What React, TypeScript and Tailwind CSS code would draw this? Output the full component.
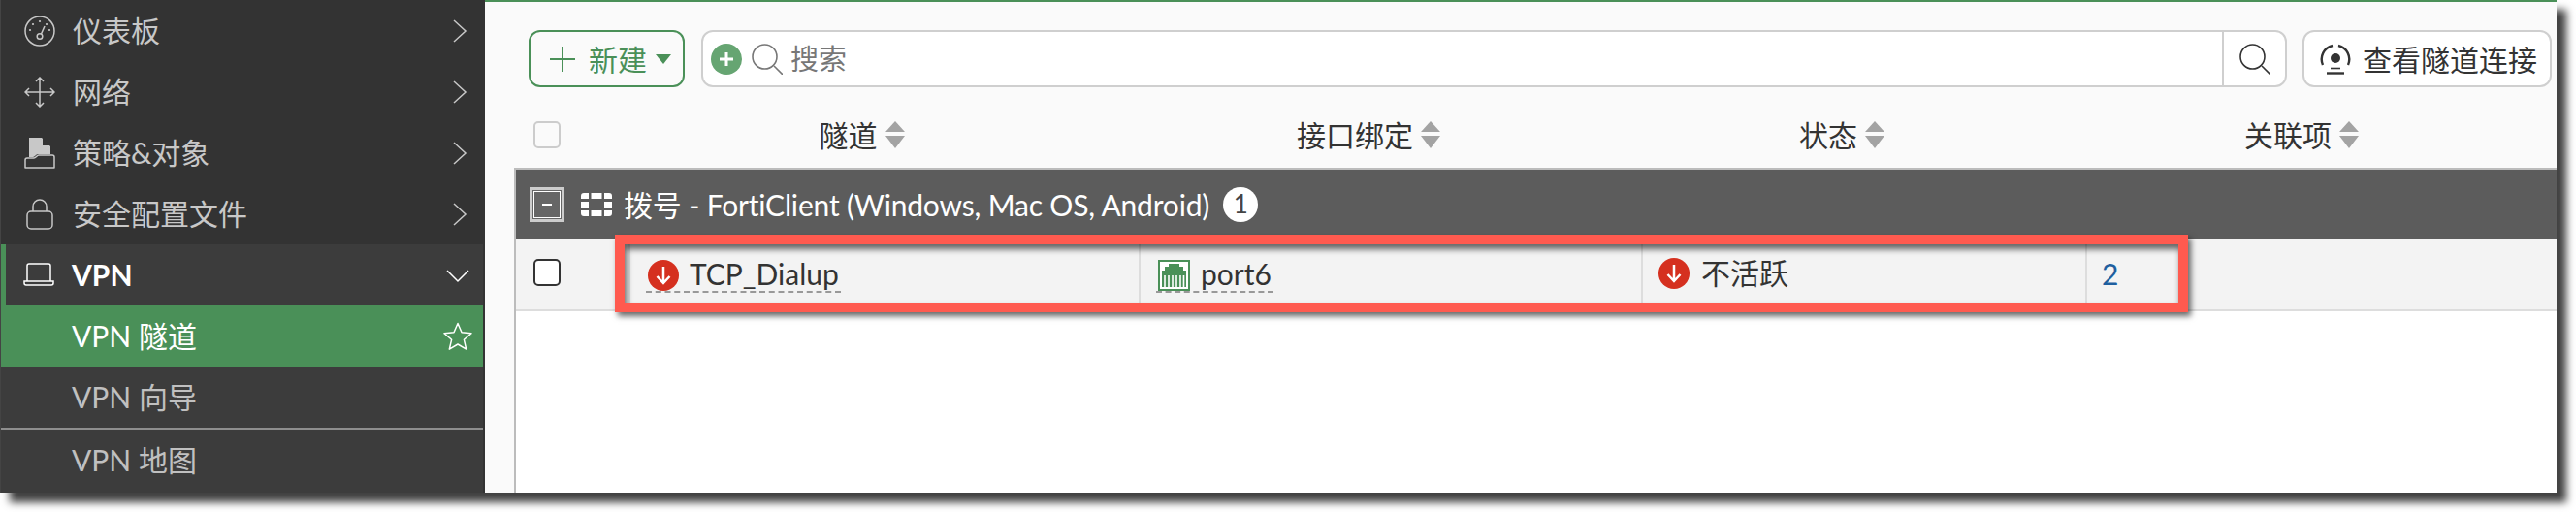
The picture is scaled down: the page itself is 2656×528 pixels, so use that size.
import React from 'react';

const font = "font-['Lato','Noto_Sans_CJK_SC',sans-serif]";

const Chevron = ({ down }: { down?: boolean }) => (
  <svg width="26" height="26" viewBox="0 0 26 26" fill="none" stroke="currentColor" strokeWidth="1.5">
    {down ? <path d="M2 8l11 11L24 8" /> : <path d="M8 2l12 11L8 24" />}
  </svg>
);

const Gauge = () => (
  <svg width="32" height="32" viewBox="0 0 32 32" fill="none" stroke="currentColor" strokeWidth="1.5">
    <circle cx="16" cy="16" r="15" />
    <circle cx="16" cy="21.5" r="2.8" />
    <path d="M17.5 19l3.5-8" />
    <g fill="currentColor" stroke="none">
      <circle cx="16" cy="6" r="1.1" />
      <circle cx="9" cy="9" r="1.1" />
      <circle cx="23" cy="9" r="1.1" />
      <circle cx="6" cy="15" r="1.1" />
      <circle cx="26" cy="15" r="1.1" />
    </g>
  </svg>
);

const MoveArrows = () => (
  <svg width="32" height="32" viewBox="0 0 32 32" fill="none" stroke="currentColor" strokeWidth="1.5">
    <path d="M16 1v30M1 16h30M12 5l4-4 4 4M12 27l4 4 4-4M5 12l-4 4 4 4M27 12l4 4-4 4" />
  </svg>
);

const PolicyIcon = () => (
  <svg width="32" height="32" viewBox="0 0 32 32" fill="none">
    <path d="M5 0h13l9 9v8H14c-2 0-3 3-5 3H5z" fill="currentColor" />
    <path d="M19 0v8h8z" fill="#333" />
    <path d="M1 31v-8c0-1 1-2 2-2h7c2 0 3-3 5-3h14c1 0 2 1 2 2v11z" fill="#333" stroke="currentColor" strokeWidth="1.5" strokeLinejoin="round" />
  </svg>
);

const LockIcon = () => (
  <svg width="28" height="32" viewBox="0 0 28 32" fill="none" stroke="currentColor" strokeWidth="1.5">
    <rect x="1" y="13" width="26" height="18" rx="4" />
    <path d="M7 13V8a7 7 0 0 1 14 0v5" />
  </svg>
);

const LaptopIcon = () => (
  <svg width="32" height="26" viewBox="0 0 32 26" fill="none" stroke="currentColor" strokeWidth="1.5">
    <path d="M4 19V3a2 2 0 0 1 2-2h20a2 2 0 0 1 2 2v16" />
    <path d="M1 19h30v2a2 2 0 0 1-2 2H3a2 2 0 0 1-2-2z" />
  </svg>
);

const StarIcon = () => (
  <svg width="30" height="30" viewBox="0 0 30 30" fill="none" stroke="currentColor" strokeWidth="1.5" strokeLinejoin="round">
    <path d="M15 1.5l4 9.3 10 .9-7.600 6.600 2.300 9.800L15 23l-8.700 5.100 2.300-9.800L1 11.700l10-.9z" />
  </svg>
);

const Search = ({ color }: { color: string }) => (
  <svg width="32" height="32" viewBox="0 0 32 32" fill="none" stroke={color} strokeWidth="1.6">
    <circle cx="13.500" cy="13.500" r="12.500" />
    <path d="M23 23l9 9" />
  </svg>
);

const SortIcon = () => (
  <svg width="20" height="28" viewBox="0 0 20 28" fill="#a3a3a3" className="shrink-0">
    <path d="M10 0l10 11H0z" />
    <path d="M0 15h20L10 28z" />
  </svg>
);

const DownBadge = () => (
  <svg width="32" height="32" viewBox="0 0 32 32" className="shrink-0">
    <circle cx="16" cy="16" r="16" fill="#d5301f" />
    <path d="M16 7v17M9.500 17l6.500 7 6.500-7" fill="none" stroke="#fff" strokeWidth="2.500" />
  </svg>
);

const PortIcon = () => (
  <svg width="33" height="32" viewBox="0 0 33 32" className="shrink-0">
    <rect x="1" y="1" width="31" height="30" fill="#fff" stroke="#4a9058" strokeWidth="2" />
    <path d="M4 28V11h3V7h4V4h11v3h4v4h3v17z" fill="#4a9058" />
    <path d="M7 16v12M11 16v12M15 16v12M19 16v12M23 16v12M26.500 16v12" stroke="#fff" strokeWidth="1.600" />
  </svg>
);

const FortiLogo = () => (
  <svg width="32" height="24" viewBox="0 0 32 24" fill="#fff">
    <path d="M0 3a3 3 0 0 1 3-3h5v6H0zM10.500 0h11v6h-11zM24 0h5a3 3 0 0 1 3 3v3h-8zM0 9h8v6H0zM24 9h8v6h-8zM0 18h8v6H3a3 3 0 0 1-3-3zM10.500 18h11v6h-11zM24 18h8v3a3 3 0 0 1-3 3h-5z" />
  </svg>
);

const TunnelConn = () => (
  <svg width="32" height="32" viewBox="0 0 32 32" fill="none" stroke="#333" strokeWidth="2.4">
    <path d="M3 22A14.500 14.500 0 0 1 13 2M19 2a14.500 14.500 0 0 1 10 20" />
    <circle cx="16" cy="15" r="5" fill="#333" stroke="none" />
    <path d="M11 25.500h10" strokeWidth="1.600" />
    <path d="M7 30.500h18" />
  </svg>
);

const NavItem = ({ icon, label }: { icon: React.ReactNode; label: string }) => (
  <div className="flex h-[63px] items-center pl-6 pr-[12px] text-[#c8c8c8]">
    <span className="flex w-8 justify-center">{icon}</span>
    <span className="ml-[18px] flex-1 text-[30px]">{label}</span>
    <Chevron />
  </div>
);

const Sidebar = () => (
  <aside className="flex w-[500px] shrink-0 flex-col border-l border-r-2 border-[#444] border-r-[#333] bg-[#333]">
    <NavItem icon={<Gauge />} label="仪表板" />
    <NavItem icon={<MoveArrows />} label="网络" />
    <NavItem icon={<PolicyIcon />} label="策略&对象" />
    <NavItem icon={<LockIcon />} label="安全配置文件" />
    <div className="flex-1 bg-[#3c3c3c]">
      <div className="flex h-[63px] items-center border-l-[5px] border-[#4a9058] pl-[18px] pr-[13px] text-white">
        <span className="flex w-8 justify-center"><LaptopIcon /></span>
        <span className="ml-[18px] flex-1 text-[30px] font-bold">VPN</span>
        <Chevron down />
      </div>
      <div className="flex h-[63px] items-center bg-[#4a9058] pl-[73px] pr-[11px] text-white">
        <span className="flex-1 text-[30px]">VPN 隧道</span>
        <StarIcon />
      </div>
      <div className="flex h-[63px] items-center pl-[73px] text-[30px] text-[#c0c0c0]">VPN 向导</div>
      <div className="flex h-[65px] items-center border-t-2 border-[#8e8e8e] pl-[73px] text-[30px] text-[#c0c0c0]">VPN 地图</div>
    </div>
  </aside>
);

const Toolbar = () => (
  <div className="flex h-[59px] items-stretch pl-[45px] pr-[5px]">
    <button className="flex w-[161px] items-center rounded-[12px] border-2 border-[#4a9058] pl-5 text-[30px] text-[#4a9058]">
      <svg width="26" height="26" viewBox="0 0 26 26" stroke="currentColor" strokeWidth="2"><path d="M13 0v26M0 13h26" /></svg>
      <span className="ml-[14px] leading-none">新建</span>
      <svg width="16" height="10" viewBox="0 0 16 10" fill="currentColor" className="ml-[9px]"><path d="M0 0h16l-8 10z" /></svg>
    </button>
    <div className="ml-[17px] flex w-[1635px] items-center rounded-[12px] border-2 border-[#cfcfcf] bg-white pl-2">
      <span className="flex h-8 w-8 items-center justify-center rounded-full bg-[#66a572]">
        <svg width="16" height="16" viewBox="0 0 16 16" stroke="#fff" strokeWidth="3"><path d="M8 1v14M1 8h14" /></svg>
      </span>
      <span className="ml-[10px]"><Search color="#777" /></span>
      <span className="ml-2 flex-1 text-[29px] text-[#777]">搜索</span>
      <span className="flex h-full w-[65px] items-center justify-center border-l-2 border-[#cfcfcf]"><Search color="#333" /></span>
    </div>
    <button className="ml-4 flex w-[257px] items-center rounded-[12px] border-2 border-[#cfcfcf] bg-white pl-4 text-[30px] text-[#333]">
      <TunnelConn />
      <span className="ml-3 leading-none">查看隧道连接</span>
    </button>
  </div>
);

const HeaderCell = ({ label }: { label: string }) => (
  <div className="flex h-7 items-center justify-center gap-2 text-[30px] leading-none text-[#333]">
    <span>{label}</span>
    <SortIcon />
  </div>
);

const Table = () => (
  <div className="relative flex flex-1 flex-col border-l-2 border-t-2 border-[#bcbcbc] bg-white">
    <div className="flex h-[71px] items-center bg-[#5c5c5c] pl-[14px] text-[30px] text-white">
      <span className="flex h-9 w-9 items-center justify-center border-[3px] border-[#ccc] bg-[#666] outline outline-1 -outline-offset-[5px] outline-white">
        <span className="h-[2px] w-[10px] bg-white" />
      </span>
      <span className="ml-[17px]"><FortiLogo /></span>
      <span className="ml-3 leading-none tracking-[-0.17px]">拨号 - FortiClient (Windows, Mac OS, Android)</span>
      <span className="ml-[14px] flex h-9 w-9 items-center justify-center rounded-full bg-white text-[26px] text-[#444]">1</span>
    </div>
    <div className="grid h-[75px] grid-cols-[116px_526px_518px_458px_1fr] items-stretch border-b-2 border-[#ddd] bg-[#f3f3f3] text-[30px] text-[#333]">
      <div className="flex items-start justify-start pl-[18px] pt-[21px]">
        <span className="h-[28px] w-[28px] rounded-[5px] border-2 border-[#333] bg-white" />
      </div>
      <div className="flex items-center border-l-2 border-[#ddd] pl-[16px]">
        <span className="inline-flex h-[38px] items-start gap-[11px] border-b-2 border-dashed border-[#999] px-[2px] pt-1 leading-[29px]">
          <DownBadge />TCP_Dialup
        </span>
      </div>
      <div className="flex items-center border-l-2 border-[#ddd] pl-[16px]">
        <span className="inline-flex h-[38px] items-start gap-[11px] border-b-2 border-dashed border-[#999] px-[2px] pt-1 leading-[29px]">
          <PortIcon />port6
        </span>
      </div>
      <div className="flex items-center gap-3 border-l-2 border-[#ddd] pb-[2px] pl-[16px]">
        <DownBadge />不活跃
      </div>
      <div className="flex items-center border-l-2 border-[#ddd] pl-[15px] text-[#1f5f9f]">2</div>
    </div>
    <div className="flex-1" />
    {/* red highlight drawn over the row */}
    <div className="pointer-events-none absolute left-[102px] top-[67px] h-[80px] w-[1622px] border-[10px] border-[#ff5a4f] shadow-[3px_4px_6px_rgba(0,0,0,0.6),inset_2px_5px_6px_rgba(0,0,0,0.6)]" />
  </div>
);

export default function App() {
  return (
    <div className={`h-[528px] w-[2656px] overflow-hidden bg-white ${font}`}>
      <div className="flex h-[508px] w-[2636px] shadow-[10px_10px_8px_#424242]">
        <Sidebar />
        <main className="flex min-w-0 flex-1 flex-col border-t-2 border-[#4a9058] bg-[#fafafa] pt-[29px]">
          <Toolbar />
          <div className="mt-[35px] grid h-7 grid-cols-[96px_527px_518px_458px_490px] grid-rows-[28px] pl-[29px]">
            <div className="flex justify-start pl-[21px]">
              <span className="h-7 w-7 rounded-[5px] border-2 border-[#ccc] bg-[#fafafa]" />
            </div>
            <HeaderCell label="隧道" />
            <HeaderCell label="接口绑定" />
            <HeaderCell label="状态" />
            <HeaderCell label="关联项" />
          </div>
          <div className="ml-[30px] mt-5 flex flex-1 flex-col">
            <Table />
          </div>
        </main>
      </div>
    </div>
  );
}
